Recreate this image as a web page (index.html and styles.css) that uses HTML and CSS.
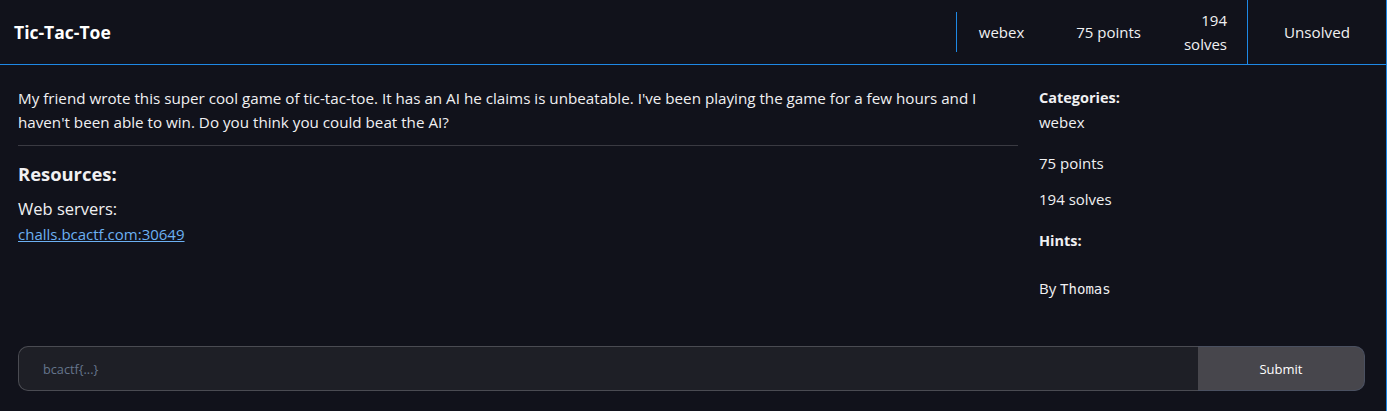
FILE: index.html
```html
<!DOCTYPE html>
<html>
<head>
<meta charset="utf-8">
<link rel="stylesheet" href="styles.css">
</head>
<body>
<div class="card">
  <header class="head">
    <div class="title">Tic-Tac-Toe</div>
    <div class="stats">
      <span class="divider"></span>
      <span class="stat cat">webex</span>
      <span class="stat pts">75 points</span>
      <span class="stat solves">194 solves</span>
    </div>
    <div class="status">Unsolved</div>
  </header>
  <div class="body">
    <div class="main">
      <p class="desc">My friend wrote this super cool game of tic-tac-toe. It has an AI he claims is unbeatable. I've been playing the game for a few hours and I haven't been able to win. Do you think you could beat the AI?</p>
      <hr class="rule">
      <h3 class="res-title">Resources:</h3>
      <div class="res-label">Web servers:</div>
      <a class="res-link" href="#">challs.bcactf.com:30649</a>
    </div>
    <aside class="side">
      <div class="side-label">Categories:</div>
      <div class="side-val first">webex</div>
      <div class="side-val gap1">75 points</div>
      <div class="side-val gap2">194 solves</div>
      <div class="side-label gap3">Hints:</div>
      <div class="side-val author">By <code>Thomas</code></div>
    </aside>
  </div>
  <form class="flag">
    <input class="flag-input" type="text" placeholder="bcactf{...}">
    <button class="flag-btn" type="button">Submit</button>
  </form>
</div>
</body>
</html>
```
FILE: styles.css
```css
html, body {
  margin: 0;
  padding: 0;
  background: #11121b;
}
body {
  font-family: "Open Sans", "Noto Sans", sans-serif;
  color: #f0f0f2;
}
.card {
  height: 411px;
  border-right: 1px solid #1e88e5;
  box-sizing: border-box;
}
.head {
  display: flex;
  align-items: stretch;
  height: 64px;
  border-bottom: 1px solid #1e88e5;
}
.title {
  flex: 1;
  display: flex;
  align-items: center;
  padding-left: 14px;
  font-weight: 700;
  font-size: 17.5px;
  color: #ffffff;
}
.stats {
  display: flex;
  align-items: center;
  font-size: 15px;
  border-right: 1px solid #1e88e5;
  padding-right: 20px;
}
.divider {
  width: 1px;
  height: 40px;
  background: #1e88e5;
  margin-right: 22px;
}
.stat {
  line-height: 24px;
}
.pts {
  margin-left: 52px;
}
.solves {
  margin-left: 36px;
  width: 50px;
  text-align: right;
}
.status {
  width: 138px;
  display: flex;
  align-items: center;
  justify-content: center;
  font-size: 15.2px;
}
.body {
  display: flex;
  gap: 21px;
  padding: 21px 0 46px 18px;
}
.main {
  width: 1000px;
}
.desc {
  margin: 0;
  font-size: 15.2px;
  line-height: 24px;
}
.rule {
  border: 0;
  border-top: 1px solid #3a3a42;
  margin: 11px 0 14px;
}
.res-title {
  margin: 0 0 9px;
  font-size: 18.4px;
  line-height: 27px;
  font-weight: 700;
}
.res-label {
  font-size: 16.5px;
  line-height: 26px;
}
.res-link {
  display: inline-block;
  margin-top: 1px;
  font-size: 15px;
  line-height: 22px;
  color: #6cb0f2;
  text-decoration: underline;
}
.side {
  font-size: 15px;
}
.side-label {
  font-weight: 700;
  font-size: 14.5px;
  line-height: 22px;
  margin-top: 1px;
}
.side-val {
  line-height: 22px;
}
.first { margin-top: 2px; }
.gap1 { margin-top: 19px; }
.gap2 { margin-top: 14px; }
.gap3 { margin-top: 20px; }
.author { margin-top: 25px; }
.author code {
  font-family: "DejaVu Sans Mono", monospace;
  font-size: 14px;
}
.flag {
  display: flex;
  margin: 0 21px 0 18px;
}
.flag-input {
  flex: 1;
  height: 45px;
  box-sizing: border-box;
  background: #1e1f26;
  border: 1px solid #4a4b52;
  border-right: 0;
  border-radius: 10px 0 0 10px;
  padding: 0 24px;
  font-family: inherit;
  font-size: 12.7px;
  color: #ececf0;
  outline: none;
}
.flag-input::placeholder {
  color: #65758c;
}
.flag-btn {
  width: 167px;
  height: 45px;
  background: #47464c;
  border: 1px solid #4a5060;
  border-left: 0;
  border-radius: 0 10px 10px 0;
  color: #ffffff;
  font-family: inherit;
  font-size: 13px;
}
```
